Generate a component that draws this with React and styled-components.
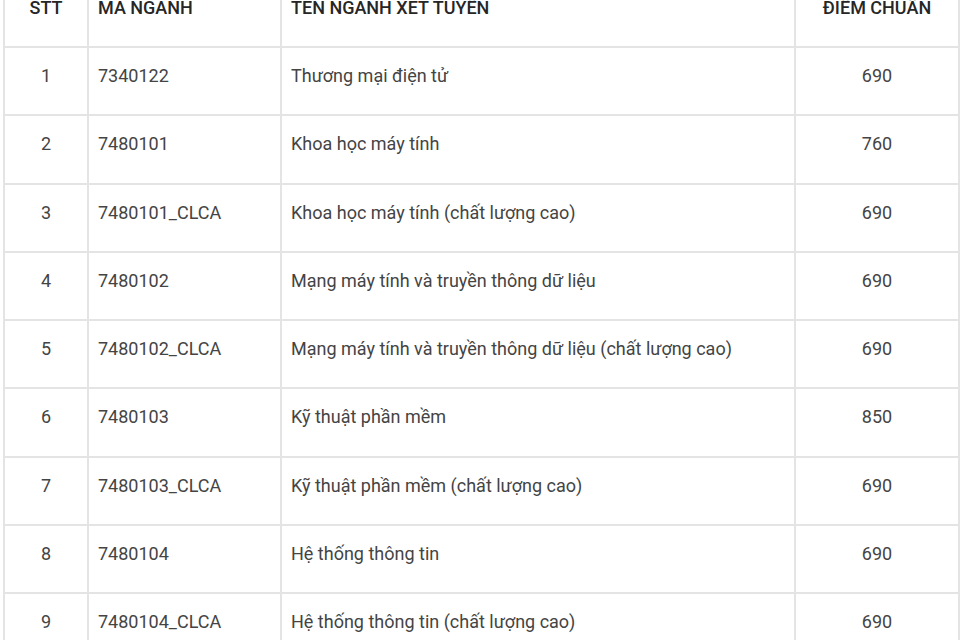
import styled, { createGlobalStyle } from "styled-components";

const GlobalStyle = createGlobalStyle`
  html, body {
    margin: 0;
    padding: 0;
    background: #ffffff;
    overflow: hidden;
  }
  body {
    font-family: Roboto, "Liberation Sans", sans-serif;
  }
`;

const Page = styled.div`
  width: 960px;
  height: 640px;
  overflow: hidden;
  padding-left: 3px;
  box-sizing: border-box;
`;

const Table = styled.table`
  border-collapse: collapse;
  table-layout: fixed;
  width: 955px;
  margin-top: -22px;
  font-size: 18px;
  line-height: 25px;
  color: #444444;
`;

const HeadCell = styled.th`
  border: 2px solid #e4e4e4;
  height: 68px;
  box-sizing: border-box;
  padding: 15px 9px 0;
  vertical-align: top;
  font-weight: 500;
  color: #262626;
  text-transform: uppercase;
  text-align: ${(p) => (p.$center ? "center" : "left")};
`;

const Cell = styled.td`
  border: 2px solid #e4e4e4;
  height: 68.25px;
  box-sizing: border-box;
  padding: 15px 9px 0;
  vertical-align: top;
  text-align: ${(p) => (p.$center ? "center" : "left")};
`;

const rows = [
  ["1", "7340122", "Thương mại điện tử", "690"],
  ["2", "7480101", "Khoa học máy tính", "760"],
  ["3", "7480101_CLCA", "Khoa học máy tính (chất lượng cao)", "690"],
  ["4", "7480102", "Mạng máy tính và truyền thông dữ liệu", "690"],
  ["5", "7480102_CLCA", "Mạng máy tính và truyền thông dữ liệu (chất lượng cao)", "690"],
  ["6", "7480103", "Kỹ thuật phần mềm", "850"],
  ["7", "7480103_CLCA", "Kỹ thuật phần mềm (chất lượng cao)", "690"],
  ["8", "7480104", "Hệ thống thông tin", "690"],
  ["9", "7480104_CLCA", "Hệ thống thông tin (chất lượng cao)", "690"],
];

export default function App() {
  return (
    <Page>
      <GlobalStyle />
      <Table>
        <colgroup>
          <col style={{ width: 84 }} />
          <col style={{ width: 193 }} />
          <col style={{ width: 514 }} />
          <col style={{ width: 164 }} />
        </colgroup>
        <thead>
          <tr>
            <HeadCell $center>STT</HeadCell>
            <HeadCell>Mã ngành</HeadCell>
            <HeadCell>Tên ngành xét tuyển</HeadCell>
            <HeadCell $center>Điểm chuẩn</HeadCell>
          </tr>
        </thead>
        <tbody>
          {rows.map(([stt, code, name, score]) => (
            <tr key={stt}>
              <Cell $center>{stt}</Cell>
              <Cell>{code}</Cell>
              <Cell>{name}</Cell>
              <Cell $center>{score}</Cell>
            </tr>
          ))}
        </tbody>
      </Table>
    </Page>
  );
}
